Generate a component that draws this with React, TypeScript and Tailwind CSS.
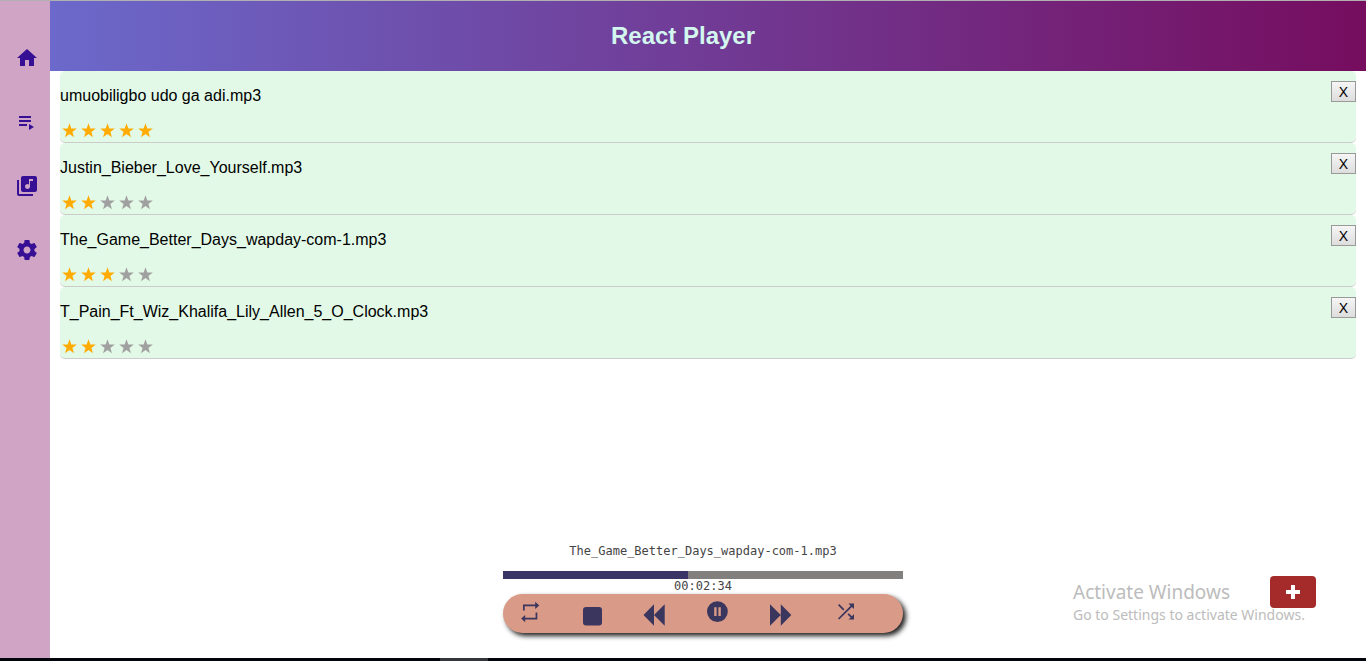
import React, { useState } from "react";

type Track = { name: string; rating: number };

const initialTracks: Track[] = [
  { name: "umuobiligbo udo ga adi.mp3", rating: 5 },
  { name: "Justin_Bieber_Love_Yourself.mp3", rating: 2 },
  { name: "The_Game_Better_Days_wapday-com-1.mp3", rating: 3 },
  { name: "T_Pain_Ft_Wiz_Khalifa_Lily_Allen_5_O_Clock.mp3", rating: 2 },
];

const navItems = [
  { label: "Home", d: "M10 20v-6h4v6h5v-8h3L12 3 2 12h3v8z" },
  { label: "Playlist", d: "M4 10h12v2H4zm0-4h12v2H4zm0 8h8v2H4zm10 0v6l5-3z" },
  {
    label: "Library",
    d: "M20 2H8c-1.1 0-2 .9-2 2v12c0 1.1.9 2 2 2h12c1.1 0 2-.9 2-2V4c0-1.1-.9-2-2-2zm-2 5h-3v5.5c0 1.38-1.12 2.5-2.5 2.5S10 13.88 10 12.5s1.12-2.5 2.5-2.5c.57 0 1.08.19 1.5.51V5h4v2zM4 6H2v14c0 1.1.9 2 2 2h14v-2H4V6z",
  },
  {
    label: "Settings",
    d: "M19.43 12.98c.04-.32.07-.64.07-.98s-.03-.66-.07-.98l2.11-1.65c.19-.15.24-.42.12-.64l-2-3.46c-.12-.22-.39-.3-.61-.22l-2.49 1c-.52-.4-1.08-.73-1.69-.98l-.38-2.65C14.46 2.18 14.25 2 14 2h-4c-.25 0-.46.18-.49.42l-.38 2.65c-.61.25-1.17.59-1.69.98l-2.49-1c-.23-.09-.49 0-.61.22l-2 3.46c-.13.22-.07.49.12.64l2.11 1.65c-.04.32-.07.65-.07.98s.03.66.07.98l-2.11 1.65c-.19.15-.24.42-.12.64l2 3.46c.12.22.39.3.61.22l2.49-1c.52.4 1.08.73 1.69.98l.38 2.65c.03.24.24.42.49.42h4c.25 0 .46-.18.49-.42l.38-2.65c.61-.25 1.17-.59 1.69-.98l2.49 1c.23.09.49 0 .61-.22l2-3.46c.12-.22.07-.49-.12-.64l-2.11-1.65zM12 15.5c-1.93 0-3.5-1.57-3.5-3.5s1.57-3.5 3.5-3.5 3.5 1.57 3.5 3.5-1.57 3.5-3.5 3.5z",
  },
];

const controls = [
  {
    label: "Repeat",
    box: "w-6",
    d: "M6.7 6.3H17.2V9L21.2 5.4 17.2 1.8V4.6H5V10.5H6.7ZM17.6 17.7H7.2V15L3.2 18.6 7.2 22.2V19.4H19.3V12.6H17.6Z",
  },
  {
    label: "Stop",
    box: "w-[22px] pt-[3px]",
    d: "M5 4H18Q21 4 21 7V19.5Q21 22.5 18 22.5H5Q2 22.5 2 19.5V7Q2 4 5 4Z",
  },
  { label: "Previous", box: "w-6 pt-[3px]", d: "M1.5 12 12 1.3V22.7ZM12 12 22.7 1.3V22.7Z" },
  {
    label: "Pause",
    box: "w-6",
    d: "M12.4 1.2a10.4 10.4 0 1 0 0 20.8 10.4 10.4 0 1 0 0-20.8ZM9.2 7.2V16H11.6V7.2ZM13.4 7.2V16H15.8V7.2Z",
  },
  { label: "Next", box: "w-[27px] pt-[3px]", d: "M23.3 12 12.8 1.3V22.7ZM12.8 12 2 1.3V22.7Z" },
  {
    label: "Shuffle",
    box: "w-6",
    d: "M10.4 9.3 5.2 4 4 5.2l5.2 5.3 1.2-1.2zM14.5 3.6l2.04 2.04L4 18.4 5.2 19.6 17.96 7.06 20 9.1V3.6h-5.5zm.2 9.6-1.2 1.2 3.2 3.2-2.2 2H20v-5.5l-2.04 2.04-3.26-2.94z",
  },
];

function Icon({ d }: { d: string }) {
  return (
    <svg viewBox="0 0 24 24" className="size-6 shrink-0 fill-current" fillRule="evenodd" aria-hidden="true">
      <path d={d} />
    </svg>
  );
}

function Stars({ rating }: { rating: number }) {
  return (
    <div role="img" aria-label={`${rating} out of 5 stars`} className="flex gap-1 px-0.5">
      {[1, 2, 3, 4, 5].map((n) => (
        <svg
          key={n}
          viewBox="0 0 15 15"
          className={n <= rating ? "size-[15px] fill-[#ffab00]" : "size-[15px] fill-[#a0a0a0]"}
        >
          <path d="M7.5 .3 9.3 5.6H14.8L10.4 8.9 12 14.2 7.5 11 3 14.2 4.6 8.9 .2 5.6H5.7Z" />
        </svg>
      ))}
    </div>
  );
}

function Player() {
  return (
    <section aria-label="Player" className="w-full max-w-[400px] text-[#3a365e]">
      <p className="text-center font-['DejaVu_Sans_Mono',monospace] text-xs text-[#444]">
        The_Game_Better_Days_wapday-com-1.mp3
      </p>
      <div className="mt-3 h-2 bg-[#82807e]">
        <div className="h-full bg-[#3a3566]" style={{ width: "46.25%" }} />
      </div>
      <p className="text-center font-['DejaVu_Sans_Mono',monospace] text-xs leading-[15px] text-[#444]">
        00:02:34
      </p>
      <div className="flex h-[39px] items-start gap-[39px] rounded-full bg-[#d99a88] pt-[6px] pl-[15px] shadow-[3px_3px_5px_#222222]">
        {controls.map((c) => (
          <button key={c.label} type="button" aria-label={c.label} className={c.box}>
            <Icon d={c.d} />
          </button>
        ))}
      </div>
    </section>
  );
}

export default function App() {
  const [tracks, setTracks] = useState(initialTracks);

  return (
    <div className="relative flex min-h-screen flex-col border-t border-[#b0b0b0] bg-white font-['Liberation_Sans',Arial,sans-serif] text-black">
      <div className="flex grow">
        <nav aria-label="Main" className="flex w-[50px] shrink-0 flex-col gap-10 bg-[#d0a4c5] pt-[45px] pl-[15px] text-[#370f94]">
          {navItems.map((item) => (
            <a key={item.label} href="#" aria-label={item.label} className="size-6">
              <Icon d={item.d} />
            </a>
          ))}
        </nav>
        <div className="flex min-w-0 grow flex-col">
          <header className="flex h-[70px] items-center justify-center bg-linear-to-r/srgb from-[#6b69cb] to-[#760d5f] pr-[50px]">
            <h1 className="text-2xl font-bold text-[#d3f7ef]">React Player</h1>
          </header>
          <main className="grow px-[10px]">
            <ul>
              {tracks.map((track) => (
                <li
                  key={track.name}
                  className="flex h-[72px] items-start justify-between rounded-[5px] border-b border-[#ccc] bg-[#e2f9e7]"
                >
                  <div className="flex flex-col gap-[18px] pt-4">
                    <p className="text-base leading-[18px]">{track.name}</p>
                    <Stars rating={track.rating} />
                  </div>
                  <button
                    type="button"
                    aria-label={`Remove ${track.name}`}
                    onClick={() => setTracks(tracks.filter((t) => t !== track))}
                    className="mt-[10px] h-[21px] w-[25px] border border-[#999] bg-linear-to-b from-[#f6f6f6] to-[#dddddd] text-sm leading-none"
                  >
                    X
                  </button>
                </li>
              ))}
            </ul>
          </main>
          <footer className="flex justify-center pr-[10px] pb-[25px]">
            <Player />
          </footer>
        </div>
      </div>
      <div className="flex h-[3px] bg-[#02040c] pl-[440px]">
        <div className="w-12 bg-[#34363c]" />
      </div>
      <button
        type="button"
        aria-label="Add track"
        className="absolute right-[50px] bottom-[53px] flex h-8 w-[46px] items-center justify-center rounded-[4px] bg-[#a52a2a] text-white"
      >
        <svg viewBox="0 0 14 14" className="size-[14px] fill-current" aria-hidden="true">
          <path d="M5 0h4v5h5v4H9v5H5V9H0V5h5Z" />
        </svg>
      </button>
      <div className="pointer-events-none absolute right-[57px] bottom-[36px] w-[236px] font-['Noto_Sans',sans-serif] whitespace-nowrap text-[#bcbcbc]">
        <p className="text-[19px] leading-[25px]">Activate Windows</p>
        <p className="text-[14px] leading-5">Go to Settings to activate Windows.</p>
      </div>
    </div>
  );
}
